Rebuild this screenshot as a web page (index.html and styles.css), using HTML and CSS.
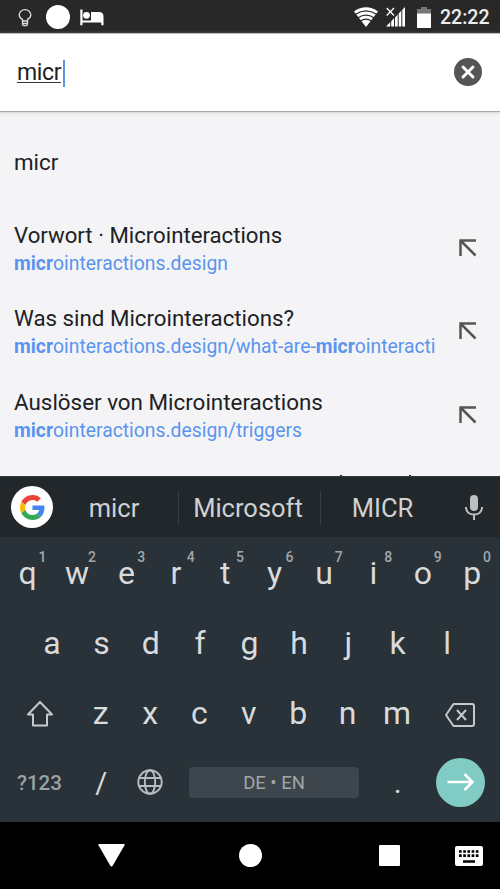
FILE: index.html
```html
<!DOCTYPE html>
<html lang="de">
<head>
<meta charset="utf-8">
<title>micr</title>
<link rel="stylesheet" href="styles.css">
</head>
<body>
<div class="phone">
  <header class="status">
    <svg class="bulb" width="14" height="18" viewBox="0 0 14 18" fill="none" stroke="#ddd" stroke-width="1.3"><path d="M4.500 12V10.300C2.400 9.200 1.200 7.800 1.200 5.900A5.800 5.200 0 0 1 12.800 5.900C12.800 7.800 11.600 9.200 9.500 10.300V12Z"/><path d="M4.500 14.300H9.500M5.300 16.500H8.700M4.500 12V15Q4.500 16.600 7 16.600T9.500 15V12"/></svg>
    <span class="dot"></span>
    <svg class="bed" width="24" height="17" viewBox="0 0 24 17" fill="#fff"><path d="M.3.500H2.500V11.500H11V3H19Q23.500 3 23.500 7.500V16.300H21.300V13.500H2.500V16.300H.3Z"/><circle cx="6.500" cy="6.300" r="3.400"/></svg>
    <span class="spacer"></span>
    <svg class="wifi" width="24" height="20" viewBox="0 0 24 20"><path fill="#fff" d="M0 4.500Q12-3.900 24 4.500L12 20Z"/><path fill="none" stroke="#282828" stroke-width="1.300" d="M1.500 7.300Q12 .5 22.500 7.300M4 10.700Q12 5.500 20 10.700M6.500 14Q12 10.400 17.500 14"/></svg>
    <svg class="signal" width="20" height="20" viewBox="0 0 20 20"><path fill="#fff" d="M19 0V19.500H0Z"/><path stroke="#282828" stroke-width="1" d="M4.700 10V20M8.500 8V20M12.200 5V20M15.800 2V20"/><path stroke="#282828" stroke-width="3" d="M8 7L10 9"/><path stroke="#fff" stroke-width="1.300" d="M.7 1L8 8.500M8 1L.7 8.500"/></svg>
    <svg class="battery" width="14" height="21" viewBox="0 0 14 21"><path fill="#777" d="M4 0H10V2H14V7H0V2H4Z"/><path fill="#fff" d="M0 6.500H14V21H0Z"/></svg>
    <span class="clock">22:22</span>
  </header>
  <div class="omnibox">
    <span class="query">micr</span><span class="caret"></span>
    <span class="spacer"></span>
    <svg width="28" height="28" viewBox="0 0 28 28"><circle cx="14" cy="14" r="14" fill="#555"/><path d="M9 9L19 19M19 9L9 19" stroke="#fff" stroke-width="2.900" stroke-linecap="round"/></svg>
  </div>
  <main class="results">
    <div class="plain">micr</div>
    <div class="row"><div class="text"><div class="title t1">Vorwort · Microinteractions</div><div class="url"><b>micr</b>ointeractions.design</div></div><svg class="arrow" width="18" height="18" viewBox="0 0 18 18"><path d="M1.500 17V1.500H17M2 2L16.500 16.500"/></svg></div>
    <div class="row"><div class="text"><div class="title t2">Was sind Microinteractions?</div><div class="url"><b>micr</b>ointeractions.design/what-are-<b>micr</b>ointeracti</div></div><svg class="arrow" width="18" height="18" viewBox="0 0 18 18"><path d="M1.500 17V1.500H17M2 2L16.500 16.500"/></svg></div>
    <div class="row"><div class="text"><div class="title t3">Auslöser von Microinteractions</div><div class="url"><b>micr</b>ointeractions.design/triggers</div></div><svg class="arrow" width="18" height="18" viewBox="0 0 18 18"><path d="M1.500 17V1.500H17M2 2L16.500 16.500"/></svg></div>
    <div class="peek"><i></i><i></i></div>
  </main>
  <section class="strip">
    <div class="google"><svg width="25" height="25" viewBox="0 0 48 48"><path fill="#EA4335" d="M24 9.500c3.540 0 6.710 1.220 9.210 3.600l6.850-6.850C35.900 2.380 30.470 0 24 0 14.620 0 6.510 5.380 2.560 13.220l7.980 6.190C12.430 13.720 17.740 9.500 24 9.500z"/><path fill="#4285F4" d="M46.980 24.550c0-1.570-.15-3.090-.38-4.550H24v9.020h12.940c-.58 2.960-2.260 5.480-4.780 7.180l7.730 6c4.510-4.180 7.090-10.360 7.090-17.650z"/><path fill="#FBBC05" d="M10.530 28.590c-.48-1.450-.76-2.990-.76-4.590s.27-3.140.76-4.590l-7.980-6.190C.92 16.460 0 20.120 0 24s.92 7.540 2.560 10.780z"/><path fill="#34A853" d="M24 48c6.480 0 11.930-2.130 15.890-5.810l-7.730-6c-2.150 1.450-4.920 2.300-8.160 2.300-6.260 0-11.570-4.220-13.470-9.910l-7.980 6.190C6.510 42.620 14.620 48 24 48z"/></svg></div>
    <div class="word w1">micr</div><div class="word w2">Microsoft</div><div class="word w3">MICR</div>
    <svg class="mic" width="18" height="25" viewBox="0 0 18 25"><rect x="5" width="8" height="16" rx="4" fill="#bdbfc1"/><path d="M1 12C1 17 4.500 19.500 9 19.500S17 17 17 12M9 19.500V25" fill="none" stroke="#bdbfc1" stroke-width="2"/></svg>
  </section>
  <section class="keyboard">
    <div class="keys"><span>q<sup>1</sup></span><span>w<sup>2</sup></span><span>e<sup>3</sup></span><span>r<sup>4</sup></span><span>t<sup>5</sup></span><span>y<sup>6</sup></span><span>u<sup>7</sup></span><span>i<sup>8</sup></span><span>o<sup>9</sup></span><span>p<sup>0</sup></span></div>
    <div class="keys second"><span>a</span><span>s</span><span>d</span><span>f</span><span>g</span><span>h</span><span>j</span><span>k</span><span>l</span></div>
    <div class="keys third">
      <div class="side"><svg width="28" height="28" viewBox="0 0 28 28" fill="none" stroke="#c6c9cb" stroke-width="2" stroke-linejoin="round"><path d="M14 2L26 14.500H21V25.500H7V14.500H2Z"/></svg></div>
      <span>z</span><span>x</span><span>c</span><span>v</span><span>b</span><span>n</span><span>m</span>
      <div class="side del"><svg width="32" height="26" viewBox="0 0 32 26" fill="none" stroke="#c6c9cb" stroke-width="2" stroke-linejoin="round"><path d="M9.500 2H28Q30 2 30 4V22Q30 24 28 24H9.500L2 13Z"/><path d="M13 8L22 18M22 8L13 18"/></svg></div>
    </div>
    <div class="bottom">
      <div class="sym">?123</div>
      <div class="slash">/</div>
      <svg class="globe" width="26" height="26" viewBox="0 0 26 26" fill="none" stroke="#b9bdc0" stroke-width="1.900"><circle cx="13" cy="13" r="11.700"/><ellipse cx="13" cy="13" rx="5.200" ry="11.700"/><path d="M2.300 9H23.700M2.300 17H23.700"/></svg>
      <div class="space">DE • EN</div>
      <div class="period">.</div>
      <div class="go"><svg width="28" height="20" viewBox="0 0 28 20" fill="none" stroke="#fff" stroke-width="2.500"><path d="M.500 10H26M17.500 2L25.500 10L17.500 18"/></svg></div>
    </div>
  </section>
  <nav class="nav">
    <svg class="back" width="27" height="23" viewBox="0 0 27 23"><path fill="#fff" d="M1 0H26Q27 0 26.500 1.300L14.800 21.500Q13.500 23.500 12.200 21.500L.5 1.300Q0 0 1 0Z"/></svg>
    <span class="home"></span><span class="recent"></span>
    <svg class="kb" width="28" height="20" viewBox="0 0 28 20"><rect width="28" height="20" rx="2" fill="#fff"/><path stroke="#000" stroke-width="2.700" stroke-dasharray="2.700 1.500" d="M4 5.500H24M4 9.700H24"/><path stroke="#000" stroke-width="2.500" d="M8 15.500H20"/></svg>
  </nav>
</div>
</body>
</html>
```
FILE: styles.css
```css
* { box-sizing: border-box; }
body { margin: 0; font-family: Roboto, "Liberation Sans", sans-serif; background: #000; }
svg { display: block; flex: none; }
.phone { width: 500px; height: 889px; display: flex; flex-direction: column; overflow: hidden; }
.spacer { flex: 1; }

.status { height: 33px; flex: none; display: flex; align-items: center; background: #282828; padding: 0 10px 0 18px; }
.dot { width: 24px; height: 24px; border-radius: 50%; background: #fff; margin: 1px 10px 0 14.400px; }
.bulb, .bed { margin-top: 2px; }
.bed { margin-left: -.5px; }
.wifi { margin-right: 8px; }
.signal { margin-right: 11px; }
.battery { margin: 0 9px 0 0; }
.wifi, .signal, .battery { margin-top: 1px; }
.clock { width: 50px; color: #eee; font-size: 19.500px; font-weight: 500; line-height: 34px; margin-top: 3px; white-space: nowrap; }

.omnibox { height: 78px; flex: none; display: flex; align-items: center; background: #fff; padding: 0 18.500px 1px 17px; position: relative; z-index: 1; border-top: 1px solid #bbb; box-shadow: 0 1px 1px #aaa, 0 2px 4px #ddd; }
.query { font-size: 23px; letter-spacing: -.35px; line-height: 25px; color: #222; border-bottom: 1px solid #333; height: 23px; display: block; margin-top: -1px; }
.caret { width: 2px; height: 27px; background: #5a94e8; margin-left: 2px; margin-top: 3px; }

.results { height: 365px; flex: none; background: #f4f4f7; padding: 1px 14px 0; overflow: hidden; color: #202124; }
.plain { height: 102px; line-height: 100px; font-size: 22.300px; }
.row { height: 83.300px; display: flex; align-items: flex-start; justify-content: space-between; padding-right: 9px; }
.text { width: 424px; overflow: hidden; white-space: nowrap; }
.title { font-size: 22.200px; line-height: 28px; height: 30px; margin-top: 7px; }
.t2 { font-size: 22.300px; }
.t3 { font-size: 22.400px; }
.url { font-size: 19.330px; line-height: 26px; color: #5b94ee; }
.arrow { fill: none; stroke: #555; stroke-width: 2.500; margin-top: 25px; }
.peek { height: 2px; margin-top: 10px; padding-left: 326px; display: flex; gap: 67px; }
.peek i { width: 2px; height: 2px; background: linear-gradient(#e0e0e2 50%, #333 50%); }

.strip { height: 61px; flex: none; background: #22272b; display: flex; align-items: center; padding: 0 17px 0 11px; border-top: 1px solid #33373c; }
.google { width: 42px; height: 42px; border-radius: 50%; background: #fff; display: grid; place-items: center; }
.word { color: #cfd1d3; font-size: 25.500px; line-height: 34px; height: 34px; text-align: center; margin-top: 1px; }
.w1 { width: 125px; padding-right: 3px; }
.w2 { width: 143px; padding-right: 3px; border: solid #383d41; border-width: 0 1px; }
.w3 { width: 123px; }
.mic { margin-left: auto; }

.keyboard { height: 285px; flex: none; background: #283238; color: #d8dadc; }
.keys { display: flex; height: 70px; padding: 0 3px; font-size: 32px; line-height: 72px; }
.keys span { width: 49.400px; text-align: center; position: relative; }
.keys sup { position: absolute; left: 35.500px; top: 11px; font-size: 14px; line-height: 18px; font-weight: 500; color: #a2a7aa; }
.second { padding-left: 27.300px; }
.third { padding: 0; line-height: 72px; }
.side { width: 76px; padding: 4px 0 0 3px; display: grid; place-items: center; }
.del { padding-left: 0; padding-top: 5px; }
.bottom { height: 75px; display: flex; align-items: center; padding: 0 15px 5px 17px; }
.sym { width: 62px; font-size: 20.500px; font-weight: 500; color: #9ba1a5; padding-top: 1px; }
.slash { width: 45px; font-size: 29px; text-align: center; padding-top: 2px; }
.globe { margin-left: 13px; }
.space { width: 171px; height: 31px; margin-left: 26px; border-radius: 4px; background: #3d464c; color: #a0a6aa; font-size: 18.500px; line-height: 32px; text-align: center; }
.period { width: 77px; text-align: center; font-size: 30px; padding-top: 1px; }
.go { width: 49px; height: 49px; border-radius: 50%; background: #80cbc4; display: grid; place-items: center; margin-left: auto; }

.nav { height: 67px; flex: none; background: #000; display: flex; align-items: center; padding-left: 98px; }
.home { width: 23px; height: 23px; border-radius: 50%; background: #fff; margin-left: 114px; }
.recent { width: 21px; height: 21px; border-radius: 1px; background: #fff; margin-left: 117px; }
.kb { margin-left: 55px; }
```
